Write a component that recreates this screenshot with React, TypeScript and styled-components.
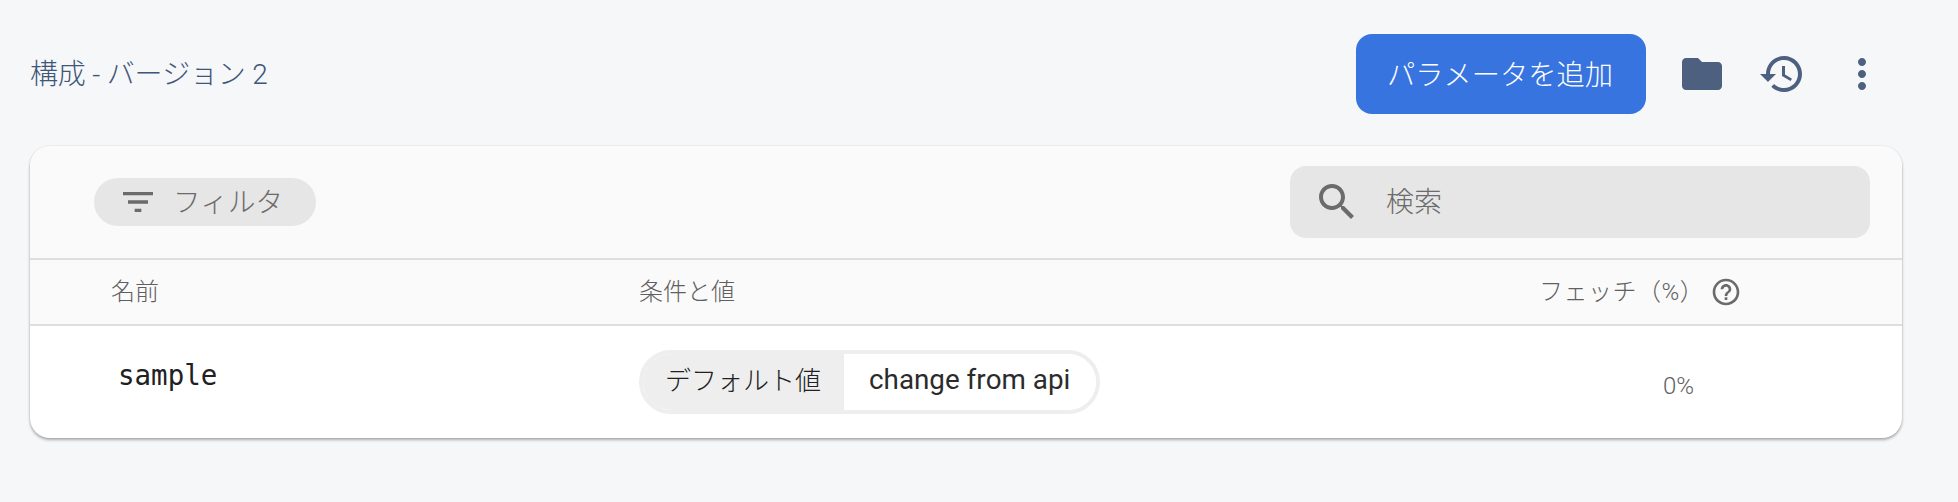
import React from "react";
import styled, { createGlobalStyle } from "styled-components";

const Global = createGlobalStyle`
  html, body { margin: 0; padding: 0; background: #f6f7f9; }
  body { font-family: Roboto, "Noto Sans CJK JP", sans-serif; font-kerning: none; }
`;

const Page = styled.div`
  width: 1958px;
  height: 502px;
  box-sizing: border-box;
  padding: 34px 56px 0 30px;
  overflow: hidden;
`;

const TopBar = styled.header`
  display: flex;
  align-items: center;
  height: 80px;
`;

const Title = styled.h1`
  flex: 1;
  margin: 0;
  padding-top: 2px;
  font-size: 28px;
  font-weight: 300;
  line-height: 40px;
  letter-spacing: -0.2px;
  color: #3f5678;
`;

const AddButton = styled.button`
  width: 290px;
  height: 80px;
  margin-right: 16px;
  padding: 0 2px 4px 0;
  border: 0;
  border-radius: 16px;
  background: #3874e0;
  color: #fff;
  font: 300 28.25px Roboto, "Noto Sans CJK JP", sans-serif;
  font-kerning: none;
`;

const IconButton = styled.button`
  display: flex;
  align-items: center;
  justify-content: center;
  width: 80px;
  height: 80px;
  padding: 0;
  border: 0;
  background: transparent;
  color: #4d6080;
`;

const Icon = styled.svg<{ $size: number }>`
  display: block;
  flex: none;
  width: ${(p) => p.$size}px;
  height: ${(p) => p.$size}px;
  fill: currentColor;
`;

const Card = styled.section`
  width: 1872px;
  margin-top: 32px;
  border-radius: 20px;
  background: #fff;
  box-shadow: 0 2px 3px rgba(0, 0, 0, 0.3), 0 0 2px rgba(0, 0, 0, 0.12);
  overflow: hidden;
`;

const Toolbar = styled.div`
  display: flex;
  align-items: center;
  justify-content: space-between;
  height: 112px;
  padding: 0 32px 0 64px;
  background: #fafafa;
  border-bottom: 2px solid #dedede;
`;

const FilterChip = styled.div`
  display: flex;
  align-items: center;
  box-sizing: border-box;
  width: 222px;
  height: 48px;
  padding-left: 24px;
  border-radius: 24px;
  background: #e6e6e6;
  color: #6b6b6b;
  font-size: 27.5px;
  font-weight: 300;
`;

const ChipLabel = styled.span`
  margin-left: 15px;
  padding-top: 2px;
  line-height: 46px;
`;

const SearchBox = styled.div`
  display: flex;
  align-items: center;
  box-sizing: border-box;
  width: 580px;
  height: 72px;
  padding-left: 23px;
  border-radius: 16px;
  background: #e6e6e6;
  color: #6b6b6b;
`;

const SearchLabel = styled.span`
  margin-left: 25px;
  padding-bottom: 4px;
  font-size: 28px;
  font-weight: 300;
  color: #6b6b6b;
`;

const HeadRow = styled.div`
  display: grid;
  grid-template-columns: 609px 900px 1fr;
  align-items: center;
  height: 64px;
  background: #fafafa;
  border-bottom: 2px solid #dedede;
  color: #5f5f5f;
  font-size: 24px;
  font-weight: 300;
`;

const HeadCell = styled.div<{ $pad?: number }>`
  display: flex;
  align-items: center;
  padding-left: ${(p) => p.$pad ?? 0}px;
`;

const HeadLabel = styled.span<{ $spaced?: boolean }>`
  padding-bottom: 5px;
  letter-spacing: ${(p) => (p.$spaced ? "0.5px" : "0")};
`;

const HelpIcon = styled.span`
  display: flex;
  margin-left: 6px;
  color: #6b6b6b;
`;

const BodyRow = styled.div`
  display: grid;
  grid-template-columns: 609px 900px 1fr;
  height: 112px;
`;

const NameCell = styled.div`
  padding: 31px 0 0 88px;
  font-family: "DejaVu Sans Mono", monospace;
  font-size: 27.5px;
  line-height: 36px;
  color: #212121;
`;

const ValueCell = styled.div`
  padding-top: 24px;
`;

const FetchCell = styled.div`
  padding: 44px 0 0 124px;
  font-size: 24px;
  font-weight: 300;
  line-height: 32px;
  color: #616161;
`;

const ValuePill = styled.div`
  display: inline-flex;
  box-sizing: border-box;
  height: 64px;
  border: 4px solid #eeeeee;
  border-radius: 32px;
  overflow: hidden;
  color: #212121;
`;

const PillLabel = styled.span`
  display: flex;
  align-items: center;
  padding: 0 23px 8px 22px;
  background: #eeeeee;
  font-size: 26px;
  font-weight: 300;
`;

const PillValue = styled.span`
  display: flex;
  align-items: center;
  padding: 0 26px 6px 25px;
  background: #fff;
  font-size: 27.8px;
  color: #2b2b2b;
`;

export default function App() {
  return (
    <Page>
      <Global />
      <TopBar>
        <Title>構成 - バージョン 2</Title>
        <AddButton>パラメータを追加</AddButton>
        <IconButton aria-label="folder">
          <Icon $size={48} viewBox="0 0 24 24">
            <path d="M10 4H4c-1.1 0-2 .9-2 2v12c0 1.1.9 2 2 2h16c1.1 0 2-.9 2-2V8c0-1.1-.9-2-2-2h-8l-2-2z" />
          </Icon>
        </IconButton>
        <IconButton aria-label="history">
          <Icon $size={48} viewBox="0 0 24 24">
            <path d="M13 3c-4.97 0-9 4.03-9 9H1l3.89 3.89.07.14L9 12H6c0-3.87 3.13-7 7-7s7 3.13 7 7-3.13 7-7 7c-1.93 0-3.68-.79-4.94-2.06l-1.42 1.42C8.27 19.99 10.51 21 13 21c4.97 0 9-4.03 9-9s-4.03-9-9-9zm-1 5v5l4.28 2.54.72-1.21-3.5-2.08V8H12z" />
          </Icon>
        </IconButton>
        <IconButton aria-label="more">
          <Icon $size={48} viewBox="0 0 24 24">
            <path d="M12 8c1.1 0 2-.9 2-2s-.9-2-2-2-2 .9-2 2 .9 2 2 2zm0 2c-1.1 0-2 .9-2 2s.9 2 2 2 2-.9 2-2-.9-2-2-2zm0 6c-1.1 0-2 .9-2 2s.9 2 2 2 2-.9 2-2-.9-2-2-2z" />
          </Icon>
        </IconButton>
      </TopBar>
      <Card>
        <Toolbar>
          <FilterChip>
            <Icon $size={40} viewBox="0 0 24 24">
              <path d="M10 18h4v-2h-4v2zM3 6v2h18V6H3zm3 7h12v-2H6v2z" />
            </Icon>
            <ChipLabel>フィルタ</ChipLabel>
          </FilterChip>
          <SearchBox>
            <Icon $size={48} viewBox="0 0 24 24">
              <path d="M15.5 14h-.79l-.28-.27C15.41 12.59 16 11.11 16 9.5 16 5.91 13.09 3 9.5 3S3 5.91 3 9.5 5.91 16 9.5 16c1.61 0 3.09-.59 4.23-1.57l.27.28v.79l5 4.99L20.49 19l-4.99-5zm-6 0C7.01 14 5 11.99 5 9.5S7.01 5 9.5 5 14 7.01 14 9.5 11.99 14 9.5 14z" />
            </Icon>
            <SearchLabel>検索</SearchLabel>
          </SearchBox>
        </Toolbar>
        <HeadRow>
          <HeadCell $pad={81}><HeadLabel>名前</HeadLabel></HeadCell>
          <HeadCell><HeadLabel>条件と値</HeadLabel></HeadCell>
          <HeadCell>
            <HeadLabel $spaced>フェッチ（%）</HeadLabel>
            <HelpIcon>
              <Icon $size={32} viewBox="0 0 24 24">
                <path d="M11 18h2v-2h-2v2zm1-16C6.48 2 2 6.48 2 12s4.48 10 10 10 10-4.48 10-10S17.52 2 12 2zm0 18c-4.41 0-8-3.59-8-8s3.59-8 8-8 8 3.59 8 8-3.59 8-8 8zm0-14c-2.21 0-4 1.79-4 4h2c0-1.1.9-2 2-2s2 .9 2 2c0 2-3 1.75-3 5h2c0-2.25 3-2.5 3-5 0-2.21-1.79-4-4-4z" />
              </Icon>
            </HelpIcon>
          </HeadCell>
        </HeadRow>
        <BodyRow>
          <NameCell>sample</NameCell>
          <ValueCell>
            <ValuePill>
              <PillLabel>デフォルト値</PillLabel>
              <PillValue>change from api</PillValue>
            </ValuePill>
          </ValueCell>
          <FetchCell>0%</FetchCell>
        </BodyRow>
      </Card>
    </Page>
  );
}
